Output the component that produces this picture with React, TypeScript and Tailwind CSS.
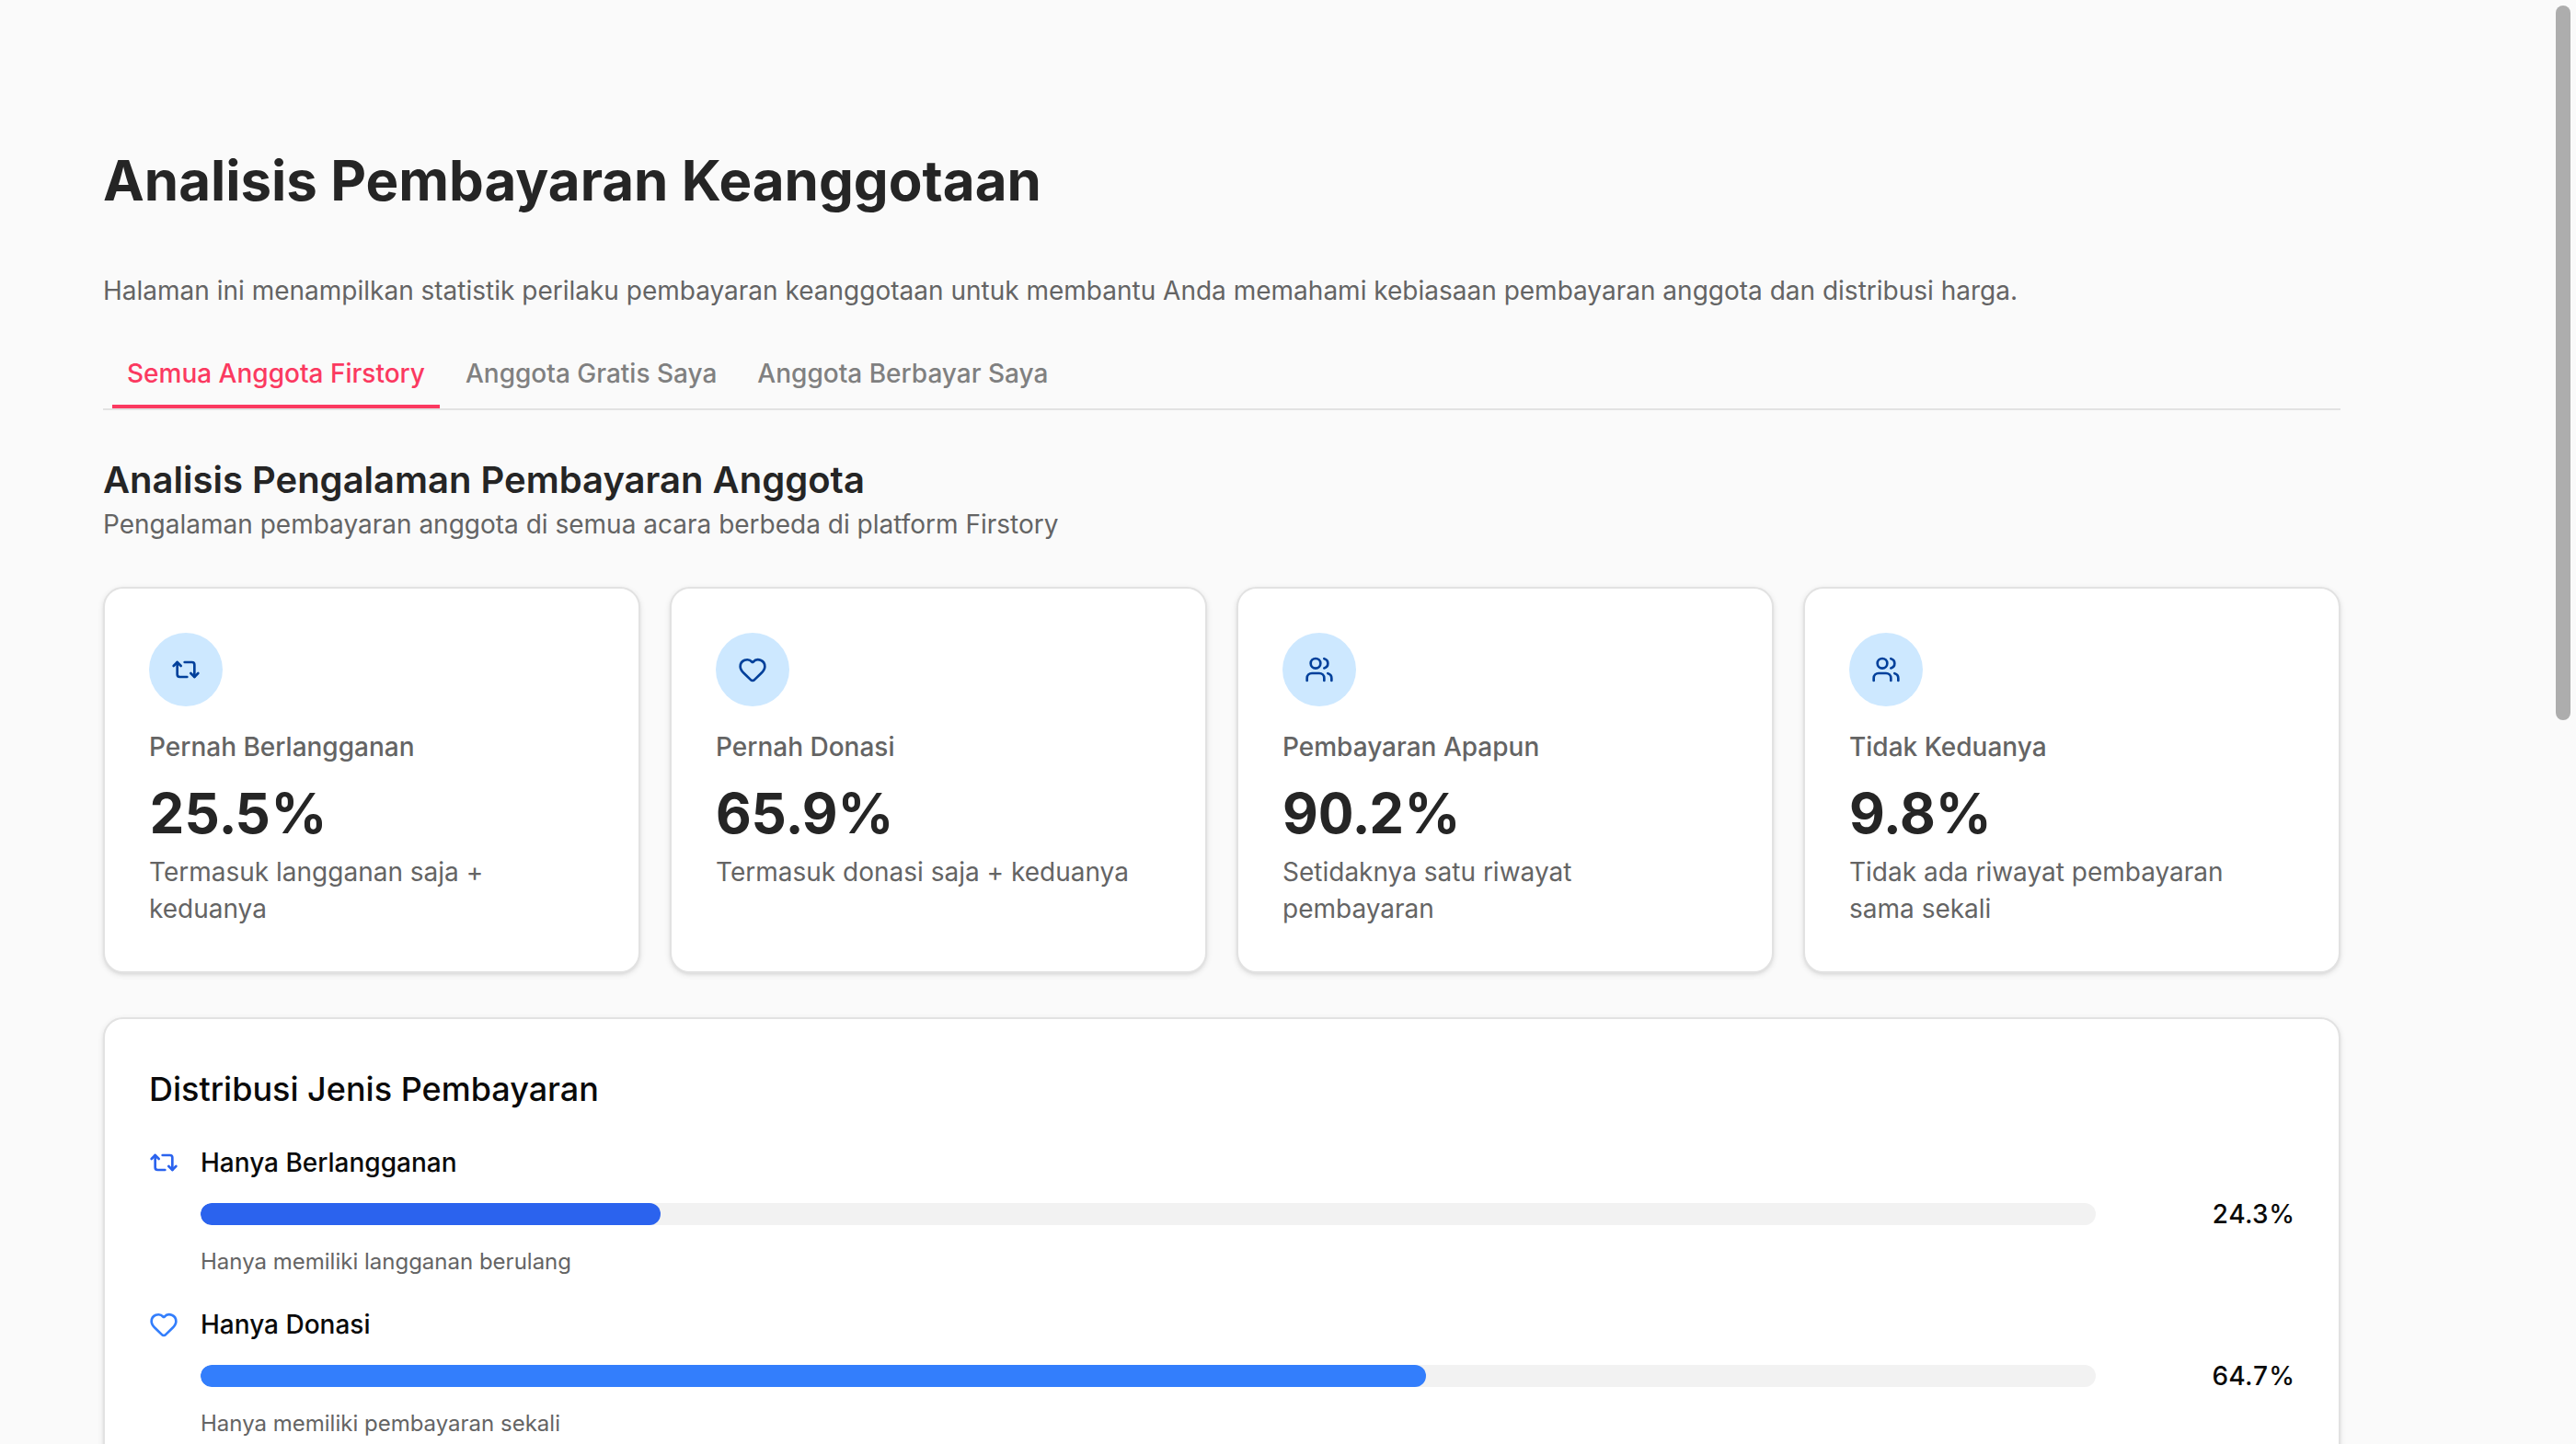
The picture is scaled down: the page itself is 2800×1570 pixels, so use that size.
import React from "react";
import { Repeat2, Heart, Users, type LucideIcon } from "lucide-react";

const tabs = ["Semua Anggota Firstory", "Anggota Gratis Saya", "Anggota Berbayar Saya"];

const stats: { icon: LucideIcon; label: string; value: string; note: string }[] = [
  { icon: Repeat2, label: "Pernah Berlangganan", value: "25.5%", note: "Termasuk langganan saja + keduanya" },
  { icon: Heart, label: "Pernah Donasi", value: "65.9%", note: "Termasuk donasi saja + keduanya" },
  { icon: Users, label: "Pembayaran Apapun", value: "90.2%", note: "Setidaknya satu riwayat pembayaran" },
  { icon: Users, label: "Tidak Keduanya", value: "9.8%", note: "Tidak ada riwayat pembayaran sama sekali" },
];

const rows: { icon: LucideIcon; label: string; pct: string; share: number; note: string; fill: string; tint: string }[] = [
  { icon: Repeat2, label: "Hanya Berlangganan", pct: "24.3%", share: 24.27, note: "Hanya memiliki langganan berulang", fill: "bg-[#2b63ee]", tint: "text-[#2b63ee]" },
  { icon: Heart, label: "Hanya Donasi", pct: "64.7%", share: 64.66, note: "Hanya memiliki pembayaran sekali", fill: "bg-[#337efc]", tint: "text-[#337efc]" },
];

const card = "rounded-[22px] border-2 border-[#e2e2e2] bg-white p-12 shadow-[0_2px_6px_0_rgba(0,0,0,0.1),0_2px_4px_-2px_rgba(0,0,0,0.1)]";

export default function App() {
  return (
    <div className="relative h-[1570px] w-[2800px] overflow-hidden bg-[#fafafa] font-['Inter',sans-serif] text-[28px] leading-10 text-[#646464]">
      <main className="ml-28 w-[2432px] pt-40">
        <h1 className="text-[60px] leading-[72px] font-bold text-[#252525]">Analisis Pembayaran Keanggotaan</h1>
        <p className="mt-16">
          Halaman ini menampilkan statistik perilaku pembayaran keanggotaan untuk membantu Anda memahami kebiasaan pembayaran anggota dan distribusi harga.
        </p>
        <nav className="mt-8 flex gap-3 border-b-2 border-[#e2e2e2] px-[10px] font-medium">
          {tabs.map((t, i) => (
            <button
              key={t}
              className={
                i === 0
                  ? "h-[76px] border-b-4 border-[#fb3960] px-4 pt-[18px] pb-[14px] text-[#fb3960]"
                  : "h-[76px] border-b-4 border-transparent px-4 pt-[18px] pb-[14px] text-[#808080]"
              }
            >
              {t}
            </button>
          ))}
        </nav>
        <h2 className="mt-12 text-[40px] leading-[56px] font-semibold text-[#252525]">Analisis Pengalaman Pembayaran Anggota</h2>
        <p>Pengalaman pembayaran anggota di semua acara berbeda di platform Firstory</p>
        <section className="mt-12 grid grid-cols-4 gap-8">
          {stats.map(({ icon: Icon, label, value, note }) => (
            <article key={label} className={card}>
              <div className="flex size-20 items-center justify-center rounded-full bg-[#cde8ff] text-[#01409b]">
                <Icon size={32} />
              </div>
              <div className="mt-6 font-medium">{label}</div>
              <div className="mt-4 text-[60px] leading-[72px] font-bold text-[#252525] tabular-nums">{value}</div>
              <div className="mt-2">{note}</div>
            </article>
          ))}
        </section>
        <section className={card + " mt-12 h-[640px]"}>
          <h3 className="text-[36px] leading-[56px] font-medium text-[#0a0a0a]">Distribusi Jenis Pembayaran</h3>
          <div className="mt-8 flex flex-col gap-8">
            {rows.map(({ icon: Icon, label, pct, share, note, fill, tint }) => (
              <div key={label} className="flex gap-6">
                <div className={"flex h-10 items-center " + tint}>
                  <Icon size={32} />
                </div>
                <div className="grow">
                  <div className="font-medium text-[#0a0a0a]">{label}</div>
                  <div className="mt-4 flex items-center justify-between">
                    <div className="h-6 w-[2060px] overflow-hidden rounded-full bg-[#f2f2f2]">
                      <div className={"h-6 rounded-full " + fill} style={{ width: share + "%" }} />
                    </div>
                    <div className="font-medium text-[#0a0a0a] tabular-nums">{pct}</div>
                  </div>
                  <div className="mt-4 text-2xl leading-8">{note}</div>
                </div>
              </div>
            ))}
          </div>
        </section>
      </main>
      <div className="absolute top-[6px] right-[6px] h-[777px] w-4 rounded-full bg-[#adadad]" />
    </div>
  );
}
